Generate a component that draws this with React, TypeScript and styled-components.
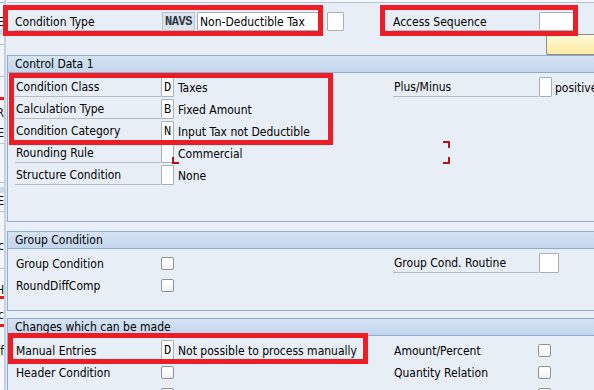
import React from 'react';
import styled, { createGlobalStyle, css } from 'styled-components';

const Global = createGlobalStyle`
  html, body { margin: 0; padding: 0; }
  body {
    background: #e8eef6;
    font-family: "DejaVu Sans Condensed", "DejaVu Sans", Verdana, sans-serif;
    font-size: 12px;
    color: #000;
  }
`;

const Screen = styled.div`
  position: relative;
  width: 594px;
  height: 390px;
  overflow: hidden;
  display: flex;
  align-items: flex-start;
  background: #e8eef6;
`;

/* ---------- left sliver of the window behind ---------- */
const Strip = styled.div`
  width: 4px;
  height: 390px;
  flex: none;
  display: flex;
  flex-direction: column;
  overflow: hidden;
  background: #f2f5f9;
  border-right: 2px solid #c6d0dc;
  margin-right: 1px;
`;

const StripCell = styled.div<{ $h: number; $bg?: string }>`
  flex: none;
  height: ${(p) => p.$h}px;
  background: ${(p) => p.$bg || 'transparent'};
  display: flex;
  justify-content: flex-end;
  align-items: center;
  overflow: hidden;
  white-space: nowrap;
  line-height: ${(p) => p.$h}px;
  color: #111;
`;

/* ---------- main area ---------- */
const Main = styled.div`
  flex: 1;
  min-width: 0;
  display: flex;
  flex-direction: column;
  & > * {
    flex: none;
  }
`;

const TopLine = styled.div`
  height: 2px;
  background: #f5f8fb;
  border-bottom: 1px solid #b1c2d8;
`;

const TopArea = styled.div`
  padding: 9px 0 0 7px;
  display: flex;
  flex-direction: column;
  & > * {
    flex: none;
  }
`;

const Row = styled.div<{ $h?: number }>`
  display: flex;
  align-items: center;
  height: ${(p) => p.$h ?? 20}px;
  margin-bottom: 2px;
`;

const LeftGroup = styled.div`
  width: 378px;
  flex: none;
  display: flex;
  align-items: center;
  height: 100%;
`;

const RightGroup = styled.div`
  display: flex;
  align-items: center;
  height: 100%;
`;

const Label = styled.div<{ $w?: number; $line?: boolean }>`
  box-sizing: border-box;
  width: ${(p) => p.$w ?? 146}px;
  flex: none;
  height: 100%;
  padding: 1px 0 0 1px;
  display: flex;
  align-items: center;
  white-space: nowrap;
  ${(p) =>
    p.$line &&
    css`
      border-bottom: 1px solid #b6bcc4;
    `}
`;

const KeyField = styled.div`
  box-sizing: border-box;
  width: 33px;
  height: 100%;
  margin-left: 1px;
  background: #dce4ed;
  border: 1px solid #b8c1cc;
  font-family: "Liberation Mono", "DejaVu Sans Mono", monospace;
  font-weight: bold;
  font-size: 12px;
  letter-spacing: -0.4px;
  color: #2c3440;
  display: flex;
  align-items: center;
  justify-content: center;
`;

const Input = styled.div<{ $w: number; $ml?: number; $mono?: boolean }>`
  box-sizing: border-box;
  width: ${(p) => p.$w}px;
  flex: none;
  height: 100%;
  margin-left: ${(p) => p.$ml ?? 0}px;
  background: #fff;
  border: 1px solid #a9afb7;
  border-radius: 1px;
  display: flex;
  align-items: center;
  padding: 1px 0 0 ${(p) => (p.$mono ? 0 : 2)}px;
  justify-content: ${(p) => (p.$mono ? 'center' : 'flex-start')};
  white-space: nowrap;
  overflow: hidden;
  ${(p) =>
    p.$mono &&
    css`
      font-family: "Liberation Mono", "DejaVu Sans Mono", monospace;
      font-size: 12px;
    `}
`;

const Desc = styled.span<{ $ml?: number }>`
  margin-left: ${(p) => p.$ml ?? 4}px;
  padding-top: 1px;
  white-space: nowrap;
`;

const Check = styled.div<{ $ml?: number }>`
  box-sizing: border-box;
  width: 13px;
  height: 13px;
  flex: none;
  margin: 1px 0 0 ${(p) => p.$ml ?? 0}px;
  border: 1px solid #8d9298;
  border-radius: 2px;
  background: linear-gradient(#ffffff, #f3f4f6);
`;

const YellowButton = styled.div`
  margin: 1px 0 0 532px;
  width: 64px;
  height: 21px;
  box-sizing: border-box;
  border: 1px solid #8f8e84;
  border-radius: 2px;
  background: linear-gradient(#fff9d8, #fdeaa2);
`;

/* ---------- panels ---------- */
const Panel = styled.div<{ $mt: number }>`
  position: relative;
  margin-top: ${(p) => p.$mt}px;
  margin-right: -20px;
  border: 1px solid #8eaacf;
  border-right: none;
  background: #e8eef6;
`;

const PanelHeader = styled.div`
  height: 16px;
  line-height: 17px;
  padding-left: 7px;
  background: linear-gradient(#d6e3f3, #c3d6ed);
  border-bottom: 1px solid #8eaacf;
  white-space: nowrap;
`;

const PanelBody = styled.div<{ $h: number }>`
  height: ${(p) => p.$h}px;
  box-sizing: border-box;
  padding: 4px 0 0 7px;
`;

/* ---------- overlays ---------- */
const RedFrame = styled.div<{ $x: number; $y: number; $w: number; $h: number }>`
  position: absolute;
  left: ${(p) => p.$x}px;
  top: ${(p) => p.$y}px;
  width: ${(p) => p.$w}px;
  height: ${(p) => p.$h}px;
  box-sizing: border-box;
  border: 5px solid #ee1c25;
  pointer-events: none;
`;

const Corner = styled.div<{ $x: number; $y: number; $kind: 'tr' | 'br' | 'bl' }>`
  position: absolute;
  left: ${(p) => p.$x}px;
  top: ${(p) => p.$y}px;
  width: 7px;
  height: 7px;
  box-sizing: border-box;
  border-color: #b3141c;
  border-style: solid;
  border-width: ${(p) =>
    p.$kind === 'tr' ? '2px 2px 0 0' : p.$kind === 'br' ? '0 2px 2px 0' : '0 0 2px 2px'};
`;

const stripItems: { h: number; bg?: string; t?: string }[] = [
  { h: 2, bg: '#f7f9fc' },
  { h: 1, bg: '#a7b7cc' },
  { h: 13 },
  { h: 12, t: 'E' },
  { h: 1 },
  { h: 6, bg: '#c8d9ee' },
  { h: 9 },
  { h: 1, bg: '#b7c3d2' },
  { h: 31 },
  { h: 1, bg: '#b7c3d2' },
  { h: 20 },
  { h: 3, bg: '#e81c24' },
  { h: 7 },
  { h: 12, t: 'R' },
  { h: 8 },
  { h: 12, t: 'E' },
  { h: 4 },
  { h: 1, bg: '#b7c3d2' },
  { h: 38 },
  { h: 1, bg: '#b7c3d2' },
  { h: 4 },
  { h: 6, bg: '#c8d9ee' },
  { h: 2 },
  { h: 12, t: 'E' },
  { h: 4 },
  { h: 1, bg: '#b7c3d2' },
  { h: 28 },
  { h: 12, t: 'c' },
  { h: 16 },
  { h: 1, bg: '#b7c3d2' },
  { h: 15 },
  { h: 12, t: 'H' },
  { h: 3, bg: '#e81c24' },
  { h: 10 },
  { h: 12, t: 'c' },
  { h: 3 },
  { h: 3, bg: '#e81c24' },
  { h: 18 },
  { h: 12, t: 'f' },
  { h: 30, bg: '#f7f9fc' },
];

export default function App() {
  return (
    <>
      <Global />
      <Screen>
        <Strip>
          {stripItems.map((s, i) => (
            <StripCell key={i} $h={s.h} $bg={s.bg}>
              {s.t}
            </StripCell>
          ))}
        </Strip>
        <Main>
          <TopLine />
          <TopArea>
            <Row $h={19}>
              <LeftGroup>
                <Label $w={147} $line>
                  Condition Type
                </Label>
                <KeyField>NAVS</KeyField>
                <Input $w={124} $ml={2}>
                  Non-Deductible Tax
                </Input>
                <Input $w={17} $ml={6} />
              </LeftGroup>
              <RightGroup>
                <Label $w={147} $line>
                  Access Sequence
                </Label>
                <Input $w={35} />
              </RightGroup>
            </Row>
            <YellowButton />
          </TopArea>

          <Panel $mt={0}>
            <PanelHeader>Control Data 1</PanelHeader>
            <PanelBody $h={148}>
              <Row>
                <LeftGroup>
                  <Label $line>Condition Class</Label>
                  <Input $w={13} $mono>D</Input>
                  <Desc>Taxes</Desc>
                </LeftGroup>
                <RightGroup>
                  <Label $line>Plus/Minus</Label>
                  <Input $w={13} />
                  <Desc $ml={3}>positive</Desc>
                </RightGroup>
              </Row>
              <Row>
                <LeftGroup>
                  <Label $line>Calculation Type</Label>
                  <Input $w={13} $mono>B</Input>
                  <Desc>Fixed Amount</Desc>
                </LeftGroup>
              </Row>
              <Row>
                <LeftGroup>
                  <Label $line>Condition Category</Label>
                  <Input $w={13} $mono>N</Input>
                  <Desc>Input Tax not Deductible</Desc>
                </LeftGroup>
              </Row>
              <Row>
                <LeftGroup>
                  <Label $line>Rounding Rule</Label>
                  <Input $w={13} />
                  <Desc>Commercial</Desc>
                </LeftGroup>
              </Row>
              <Row>
                <LeftGroup>
                  <Label $line>Structure Condition</Label>
                  <Input $w={13} />
                  <Desc>None</Desc>
                </LeftGroup>
              </Row>
            </PanelBody>
          </Panel>

          <Panel $mt={9}>
            <PanelHeader>Group Condition</PanelHeader>
            <PanelBody $h={61}>
              <Row>
                <LeftGroup>
                  <Label>Group Condition</Label>
                  <Check />
                </LeftGroup>
                <RightGroup>
                  <Label $line>Group Cond. Routine</Label>
                  <Input $w={20} />
                </RightGroup>
              </Row>
              <Row>
                <LeftGroup>
                  <Label>RoundDiffComp</Label>
                  <Check />
                </LeftGroup>
              </Row>
            </PanelBody>
          </Panel>

          <Panel $mt={7}>
            <PanelHeader>Changes which can be made</PanelHeader>
            <PanelBody $h={80}>
              <Row>
                <LeftGroup>
                  <Label>Manual Entries</Label>
                  <Input $w={13} $mono>D</Input>
                  <Desc>Not possible to process manually</Desc>
                </LeftGroup>
                <RightGroup>
                  <Label>Amount/Percent</Label>
                  <Check $ml={-1} />
                </RightGroup>
              </Row>
              <Row>
                <LeftGroup>
                  <Label>Header Condition</Label>
                  <Check />
                </LeftGroup>
                <RightGroup>
                  <Label>Quantity Relation</Label>
                  <Check $ml={-1} />
                </RightGroup>
              </Row>
              <Row>
                <LeftGroup>
                  <Label />
                  <Check />
                </LeftGroup>
                <RightGroup>
                  <Label />
                  <Check $ml={-1} />
                </RightGroup>
              </Row>
            </PanelBody>
          </Panel>
        </Main>

        <Corner $x={443} $y={141} $kind="tr" />
        <Corner $x={443} $y={157} $kind="br" />
        <Corner $x={172} $y={157} $kind="bl" />

        <RedFrame $x={3} $y={5} $w={320} $h={31} />
        <RedFrame $x={380} $y={5} $w={198} $h={31} />
        <RedFrame $x={9} $y={73} $w={324} $h={72} />
        <RedFrame $x={8} $y={333} $w={360} $h={31} />
      </Screen>
    </>
  );
}
